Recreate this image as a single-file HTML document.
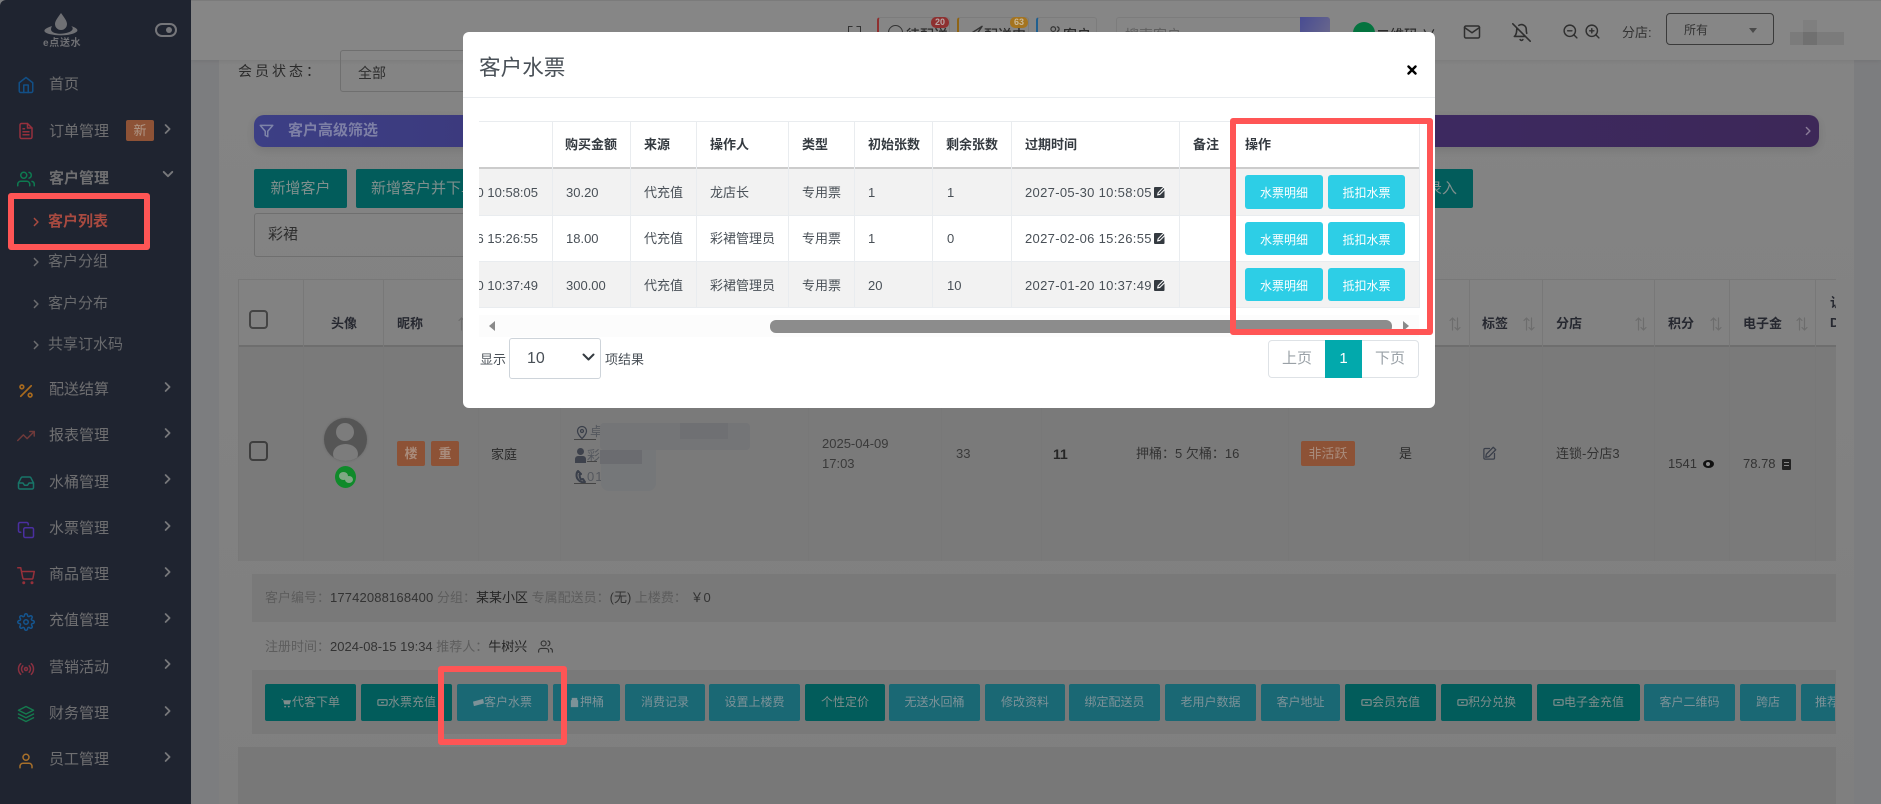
<!DOCTYPE html>
<html lang="zh-CN"><head><meta charset="utf-8"><title>客户水票</title>
<style>
html,body{margin:0;padding:0;width:1881px;height:804px;overflow:hidden;background:#7c7d7f;font-family:"Liberation Sans","Noto Sans CJK SC",sans-serif;font-size:13px}
.a{position:absolute}
.t{position:absolute;white-space:nowrap;line-height:20px;height:20px;margin-top:1px}
svg{position:absolute;fill:none;stroke-linecap:round;stroke-linejoin:round}
.side{left:0;top:0;width:191px;height:804px;background:#1f2430;border-top-left-radius:6px}
.m{font-size:15px;color:#6f6f71;left:49px}
.s{font-size:15px;color:#696a6d;left:48px}
.ic{width:18px;height:18px;left:17px;stroke-width:2}
.ch{width:8px;height:12px;left:164px;stroke:#77787b;stroke-width:2.200;margin-top:1px}
.sc{width:7px;height:10px;left:33px;stroke:#6b6c6f;stroke-width:2.200;margin-top:1px}
.b{position:absolute;top:684px;height:37px;line-height:37px;text-align:center;font-size:12px;border-radius:2px;white-space:nowrap;overflow:hidden}
.d{background:#025c5b;color:#7f8d8c}
.l{background:#1a6874;color:#7d9298}
.bi{position:static;display:inline-block;vertical-align:-2px;width:11px;height:11px}
.v{position:absolute;width:1px;background:#787878}
.hd{font-weight:bold;color:#262830;font-size:13px}
.mh{font-weight:bold;color:#343a40;font-size:13px}
.mc{color:#495057;font-size:13px}
.dt{letter-spacing:.32px}
.mv{position:absolute;width:1px;background:#e9ecef;top:121px;height:187px}
.mb{position:absolute;width:78px;height:34px;line-height:36px;background:#2dcee6;color:#fff;font-size:12px;text-align:center;border-radius:3px}
.rb{position:absolute;border:6px solid #ff5555;border-radius:3px;box-sizing:border-box}
.tp{font-size:14px;color:#2c2c2c;font-weight:500}
</style></head><body>
<svg width="0" height="0" style="position:absolute"><defs>
<symbol id="home" viewBox="0 0 24 24"><path d="M3 9l9-7 9 7v11a2 2 0 0 1-2 2H5a2 2 0 0 1-2-2z"/><path d="M9 22V12h6v10"/></symbol>
<symbol id="file" viewBox="0 0 24 24"><path d="M14 2H6a2 2 0 0 0-2 2v16a2 2 0 0 0 2 2h12a2 2 0 0 0 2-2V8z"/><path d="M14 2v6h6M16 13H8M16 17H8M10 9H8"/></symbol>
<symbol id="users" viewBox="0 0 24 24"><path d="M17 21v-2a4 4 0 0 0-4-4H5a4 4 0 0 0-4 4v2"/><circle cx="9" cy="7" r="4"/><path d="M23 21v-2a4 4 0 0 0-3-3.87M16 3.13a4 4 0 0 1 0 7.75"/></symbol>
<symbol id="pct" viewBox="0 0 24 24"><path d="M19 5L5 19"/><circle cx="6.5" cy="6.5" r="2.5"/><circle cx="17.5" cy="17.5" r="2.5"/></symbol>
<symbol id="trend" viewBox="0 0 24 24"><path d="M23 6l-9.5 9.5-5-5L1 18"/><path d="M17 6h6v6"/></symbol>
<symbol id="inbox" viewBox="0 0 24 24"><path d="M22 12h-6l-2 3h-4l-2-3H2"/><path d="M5.45 5.11L2 12v6a2 2 0 0 0 2 2h16a2 2 0 0 0 2-2v-6l-3.45-6.89A2 2 0 0 0 16.76 4H7.24a2 2 0 0 0-1.79 1.11z"/></symbol>
<symbol id="copy" viewBox="0 0 24 24"><rect x="9" y="9" width="13" height="13" rx="2"/><path d="M5 15H4a2 2 0 0 1-2-2V4a2 2 0 0 1 2-2h9a2 2 0 0 1 2 2v1"/></symbol>
<symbol id="cart" viewBox="0 0 24 24"><circle cx="9" cy="21" r="1"/><circle cx="20" cy="21" r="1"/><path d="M1 1h4l2.68 13.39a2 2 0 0 0 2 1.61h9.72a2 2 0 0 0 2-1.61L23 6H6"/></symbol>
<symbol id="gear" viewBox="0 0 24 24"><circle cx="12" cy="12" r="3"/><path d="M19.4 15a1.65 1.65 0 0 0 .33 1.82l.06.06a2 2 0 0 1 0 2.83 2 2 0 0 1-2.83 0l-.06-.06a1.65 1.65 0 0 0-1.82-.33 1.65 1.65 0 0 0-1 1.51V21a2 2 0 0 1-2 2 2 2 0 0 1-2-2v-.09A1.65 1.65 0 0 0 9 19.4a1.65 1.65 0 0 0-1.82.33l-.06.06a2 2 0 0 1-2.83 0 2 2 0 0 1 0-2.83l.06-.06a1.65 1.65 0 0 0 .33-1.82 1.65 1.65 0 0 0-1.51-1H3a2 2 0 0 1-2-2 2 2 0 0 1 2-2h.09A1.65 1.65 0 0 0 4.6 9a1.65 1.65 0 0 0-.33-1.82l-.06-.06a2 2 0 0 1 0-2.83 2 2 0 0 1 2.83 0l.06.06a1.65 1.65 0 0 0 1.82.33H9a1.65 1.65 0 0 0 1-1.51V3a2 2 0 0 1 2-2 2 2 0 0 1 2 2v.09a1.65 1.65 0 0 0 1 1.51 1.65 1.65 0 0 0 1.82-.33l.06-.06a2 2 0 0 1 2.83 0 2 2 0 0 1 0 2.83l-.06.06a1.65 1.65 0 0 0-.33 1.82V9a1.65 1.65 0 0 0 1.51 1H21a2 2 0 0 1 2 2 2 2 0 0 1-2 2h-.09a1.65 1.65 0 0 0-1.51 1z"/></symbol>
<symbol id="radio" viewBox="0 0 24 24"><circle cx="12" cy="12" r="2"/><path d="M16.24 7.76a6 6 0 0 1 0 8.49m-8.48-.01a6 6 0 0 1 0-8.49m11.31-2.82a10 10 0 0 1 0 14.14m-14.14 0a10 10 0 0 1 0-14.14"/></symbol>
<symbol id="layers" viewBox="0 0 24 24"><path d="M12 2L2 7l10 5 10-5z"/><path d="M2 17l10 5 10-5M2 12l10 5 10-5"/></symbol>
<symbol id="user" viewBox="0 0 24 24"><path d="M20 21v-2a4 4 0 0 0-4-4H8a4 4 0 0 0-4 4v2"/><circle cx="12" cy="7" r="4"/></symbol>
<symbol id="mail" viewBox="0 0 24 24"><path d="M4 4h16c1.100 0 2 .9 2 2v12c0 1.100-.9 2-2 2H4c-1.100 0-2-.9-2-2V6c0-1.100.9-2 2-2z"/><path d="M22 6l-10 7L2 6"/></symbol>
<symbol id="cr" viewBox="0 0 10 14"><path d="M2 2l5 5-5 5"/></symbol>
<symbol id="edit" viewBox="0 0 12 12"><rect x="0" y="1" width="10.500" height="11" rx="1" fill="#343a40"/><path d="M3 9.500l.7-3L9.500 .5 12 3 6 9z" fill="#fff"/><path d="M4.400 8.100l.4-1.400L9.500 2 10.500 3 5.800 7.700z" fill="#343a40"/></symbol>
<symbol id="sort" viewBox="0 0 12 14"><path d="M3.500 1v12M1 3.500L3.500 1 6 3.500M8.500 1v12M6 10.500L8.500 13l2.500-2.500"/></symbol>
<symbol id="tk" viewBox="0 0 12 12"><rect x="1" y="3" width="10" height="6" rx="1" stroke="currentColor" stroke-width="1.300"/><path d="M5 6h2" stroke="currentColor" stroke-width="1.300"/></symbol>
<symbol id="bc" viewBox="0 0 12 12"><path d="M0 2h2l1.500 6h6L11 3.500H2.500z" fill="currentColor"/><circle cx="4.500" cy="10.500" r="1" fill="currentColor"/><circle cx="8.500" cy="10.500" r="1" fill="currentColor"/></symbol>
</defs></svg>

<!-- main background -->
<div class="a" style="left:191px;top:0;width:1690px;height:804px;background:#7c7d7f"></div>
<div class="a" style="left:219px;top:60px;width:1635px;height:744px;background:linear-gradient(#848484,#7f7f7f)"></div>
<div class="a" style="left:191px;top:0;width:1690px;height:60px;background:#868686;box-shadow:0 1px 4px rgba(0,0,0,.08);border-top:1px solid #7b7b7b;box-sizing:border-box"></div>

<!-- topbar -->
<div class="a" style="left:848px;top:26px;width:13px;height:8px;border:1.500px solid #333;border-bottom:0;box-sizing:border-box;clip-path:polygon(0 0,35% 0,35% 40%,65% 40%,65% 0,100% 0,100% 100%,0 100%)"></div>
<div class="a" style="left:877px;top:17px;width:73px;height:20px;border:1px solid #7c7c7c;border-left:2px solid #8f2f2f;border-radius:3px;box-sizing:border-box"></div>
<div class="a" style="left:888px;top:25px;width:15px;height:15px;border:1.500px solid #333;border-radius:50%;box-sizing:border-box"></div>
<div class="t tp" style="left:906px;top:24px">待配送</div>
<div class="a" style="left:931px;top:17px;width:18px;height:11px;line-height:11px;border-radius:5px;background:#8e3030;color:#b7a6a6;font-size:9px;text-align:center;font-weight:bold">20</div>
<div class="a" style="left:957px;top:17px;width:72px;height:20px;border:1px solid #7c7c7c;border-left:2px solid #8f6414;border-radius:3px;box-sizing:border-box"></div>
<svg style="left:968px;top:25px;width:15px;height:12px;stroke:#333;stroke-width:1.500" viewBox="0 0 16 12"><path d="M1 10L15 1 9 10"/></svg>
<div class="t tp" style="left:984px;top:24px">配送中</div>
<div class="a" style="left:1010px;top:17px;width:18px;height:11px;line-height:11px;border-radius:5px;background:#a5741f;color:#c9b896;font-size:9px;text-align:center;font-weight:bold">63</div>
<div class="a" style="left:1036px;top:17px;width:61px;height:20px;border:1px solid #7c7c7c;border-left:2px solid #205f8f;border-radius:3px;box-sizing:border-box"></div>
<svg style="left:1048px;top:25px;width:14px;height:14px;stroke:#333;stroke-width:2"><use href="#users"/></svg>
<div class="t tp" style="left:1063px;top:24px">客户</div>
<div class="a" style="left:1116px;top:17px;width:214px;height:20px;border:1px solid #7c7c7c;border-radius:3px;box-sizing:border-box"></div>
<div class="t" style="left:1125px;top:24px;font-size:14px;color:#5f5f5f">搜索客户</div>
<div class="a" style="left:1300px;top:17px;width:30px;height:20px;background:linear-gradient(120deg,#484c92,#6a688c);border-radius:0 3px 3px 0"></div>
<div class="a" style="left:1353px;top:22px;width:22px;height:22px;border-radius:50%;background:#04733f"></div>
<div class="t tp" style="left:1376px;top:24px">二维码 ∨</div>
<svg style="left:1463px;top:23px;width:18px;height:18px;stroke:#2f2f2f;stroke-width:2"><use href="#mail"/></svg>
<svg style="left:1512px;top:23px;width:19px;height:19px;stroke:#2f2f2f;stroke-width:2" viewBox="0 0 24 24"><path d="M13.730 21a2 2 0 0 1-3.460 0M18.630 13A17.890 17.890 0 0 1 18 8M6.260 6.260A5.860 5.860 0 0 0 6 8c0 7-3 9-3 9h14M18 8a6 6 0 0 0-9.330-5M1 1l22 22"/></svg>
<svg style="left:1562px;top:23px;width:17px;height:17px;stroke:#2f2f2f;stroke-width:2" viewBox="0 0 24 24"><circle cx="11" cy="11" r="8"/><path d="M21 21l-4.350-4.350M8 11h6"/></svg>
<svg style="left:1584px;top:23px;width:17px;height:17px;stroke:#2f2f2f;stroke-width:2" viewBox="0 0 24 24"><circle cx="11" cy="11" r="8"/><path d="M21 21l-4.350-4.350M8 11h6M11 8v6"/></svg>
<div class="t" style="left:1622px;top:22px;font-size:13px;color:#333">分店:</div>
<div class="a" style="left:1666px;top:13px;width:108px;height:32px;border:1px solid #3a3a3a;border-radius:4px;box-sizing:border-box"></div>
<div class="t" style="left:1684px;top:19px;font-size:12px;color:#333">所有</div>
<div class="a" style="left:1749px;top:28px;width:0;height:0;border:4px solid transparent;border-top:5px solid #4a4a4a"></div>
<div class="a" style="left:1790px;top:32px;width:54px;height:13px;background:#7b7b7b"></div>
<div class="a" style="left:1803px;top:20px;width:14px;height:12px;background:#7f7f7f"></div>
<div class="a" style="left:1803px;top:32px;width:14px;height:13px;background:#707070"></div>

<!-- filter -->
<div class="t" style="left:238px;top:60px;font-size:14px;letter-spacing:3px;color:#2b2b2b">会员状态：</div>
<div class="a" style="left:340px;top:50px;width:300px;height:42px;border:1px solid #6f6f6f;border-radius:3px;box-sizing:border-box"></div>
<div class="t" style="left:358px;top:62px;font-size:14px;color:#2f2f2f">全部</div>
<div class="a" style="left:254px;top:115px;width:1565px;height:32px;border-radius:10px;background:linear-gradient(90deg,#3c3f85 0%,#3d2a66 60%,#3d2858 100%);box-shadow:0 3px 8px rgba(0,0,0,.1)"></div>
<svg style="left:259px;top:123px;width:15px;height:16px;stroke:#7e84a8;stroke-width:2.400" viewBox="0 0 24 24"><path d="M22 3H2l8 9.460V19l4 2v-8.540z"/></svg>
<div class="t" style="left:288px;top:120px;font-size:15px;font-weight:bold;color:#7e80a6">客户高级筛选</div>
<svg style="left:1805px;top:126px;width:7px;height:10px;stroke:#8a7c98;stroke-width:2"><use href="#cr"/></svg>
<div class="a" style="left:254px;top:169px;width:93px;height:39px;background:#025c5b;border-radius:2px;line-height:39px;text-align:center;color:#7f8f8d;font-size:15px">新增客户</div>
<div class="a" style="left:356px;top:169px;width:1117px;height:39px;background:#025c5b;border-radius:2px;line-height:39px;color:#7f8f8d;font-size:15px;padding-left:15px;box-sizing:border-box">新增客户并下单</div>
<div class="t" style="left:1427px;top:178px;font-size:15px;color:#7f8f8d">录入</div>
<div class="a" style="left:254px;top:213px;width:500px;height:44px;border:1px solid #6f6f6f;border-radius:3px;box-sizing:border-box"></div>
<div class="t" style="left:268px;top:224px;font-size:15px;color:#2f2f2f">彩裙</div>

<!-- table -->
<div class="a" style="left:238px;top:279px;width:1598px;height:1px;background:#787878"></div>
<div class="a" style="left:238px;top:347px;width:1598px;height:214px;background:#7a7a7a"></div>
<div class="a" style="left:238px;top:345px;width:1598px;height:2px;background:#6e6e6e"></div>
<div class="a" style="left:238px;top:747px;width:1598px;height:57px;background:#787878"></div>
<div class="v" style="left:238px;top:279px;height:282px"></div>
<div class="v" style="left:303px;top:279px;height:282px"></div>
<div class="v" style="left:383px;top:279px;height:282px"></div>
<div class="v" style="left:478px;top:279px;height:282px"></div>
<div class="v" style="left:560px;top:279px;height:282px"></div>
<div class="v" style="left:808px;top:279px;height:282px"></div>
<div class="v" style="left:941px;top:279px;height:282px"></div>
<div class="v" style="left:1041px;top:279px;height:282px"></div>
<div class="v" style="left:1288px;top:279px;height:282px"></div>
<div class="v" style="left:1469px;top:279px;height:282px"></div>
<div class="v" style="left:1542px;top:279px;height:282px"></div>
<div class="v" style="left:1654px;top:279px;height:282px"></div>
<div class="v" style="left:1729px;top:279px;height:282px"></div>
<div class="v" style="left:1815px;top:279px;height:282px"></div>
<div class="a" style="left:249px;top:310px;width:19px;height:19px;border:2px solid #444;border-radius:4px;box-sizing:border-box"></div>
<div class="t hd" style="left:331px;top:313px">头像</div>
<div class="t hd" style="left:397px;top:313px">昵称</div>
<svg style="left:458px;top:317px;width:12px;height:14px;stroke:#6d6d6d;stroke-width:1.200"><use href="#sort"/></svg>
<svg style="left:1449px;top:317px;width:12px;height:14px;stroke:#6d6d6d;stroke-width:1.200"><use href="#sort"/></svg>
<div class="t hd" style="left:1482px;top:313px">标签</div>
<svg style="left:1523px;top:317px;width:12px;height:14px;stroke:#6d6d6d;stroke-width:1.200"><use href="#sort"/></svg>
<div class="t hd" style="left:1556px;top:313px">分店</div>
<svg style="left:1635px;top:317px;width:12px;height:14px;stroke:#6d6d6d;stroke-width:1.200"><use href="#sort"/></svg>
<div class="t hd" style="left:1668px;top:313px">积分</div>
<svg style="left:1710px;top:317px;width:12px;height:14px;stroke:#6d6d6d;stroke-width:1.200"><use href="#sort"/></svg>
<div class="t hd" style="left:1743px;top:313px">电子金</div>
<svg style="left:1796px;top:317px;width:12px;height:14px;stroke:#6d6d6d;stroke-width:1.200"><use href="#sort"/></svg>
<div class="a" style="left:1830px;top:293px;width:6px;height:44px;overflow:hidden"><div class="hd" style="width:14px;line-height:20px">认 D</div></div>

<!-- row -->
<div class="a" style="left:249px;top:441px;width:19px;height:20px;border:2px solid #3e3e3e;border-radius:4px;box-sizing:border-box"></div>
<div class="a" style="left:324px;top:418px;width:43px;height:43px;border-radius:50%;background:#555;overflow:hidden;box-shadow:0 0 2px #666">
<div class="a" style="left:12px;top:5px;width:18px;height:18px;border-radius:50%;background:#7c7c7c"></div>
<div class="a" style="left:9px;top:26px;width:25px;height:20px;border-radius:50%;background:#7c7c7c"></div></div>
<div class="a" style="left:335px;top:466px;width:21px;height:22px;border-radius:50%;background:#0f8a2a"></div>
<div class="a" style="left:339px;top:472px;width:9px;height:8px;border-radius:50%;background:#7ea884"></div>
<div class="a" style="left:345px;top:476px;width:8px;height:7px;border-radius:50%;background:#7ea884"></div>
<div class="a" style="left:397px;top:441px;width:28px;height:25px;line-height:25px;text-align:center;background:#8d5236;border-radius:2px;color:#a98c7c;font-size:13px;font-weight:bold">楼</div>
<div class="a" style="left:431px;top:441px;width:28px;height:25px;line-height:25px;text-align:center;background:#8d5236;border-radius:2px;color:#a98c7c;font-size:13px;font-weight:bold">重</div>
<div class="t" style="left:491px;top:444px;color:#2b2b2b">家庭</div>
<svg style="left:576px;top:425px;width:12px;height:15px;stroke:#3a3f4a;stroke-width:2.500" viewBox="0 0 24 28"><path d="M21 11c0 7-9 15-9 15s-9-8-9-15a9 9 0 0 1 18 0z"/><circle cx="12" cy="11" r="3"/></svg>
<div class="t" style="left:590px;top:421px;color:#55585e">卓</div>
<div class="a" style="left:574px;top:439px;width:22px;height:1px;background:#444"></div>
<div class="a" style="left:577px;top:448px;width:7px;height:7px;border-radius:50%;background:#3e424c"></div>
<div class="a" style="left:575px;top:456px;width:11px;height:7px;border-radius:3px 3px 0 0;background:#3e424c"></div>
<div class="t" style="left:587px;top:445px;color:#55585e">彩</div>
<div class="a" style="left:587px;top:461px;width:10px;height:1px;background:#444"></div>
<div class="t" style="left:587px;top:466px;color:#55585e;letter-spacing:1px">01</div>
<div class="a" style="left:574px;top:483px;width:22px;height:1px;background:#444"></div>
<svg style="left:575px;top:470px;width:11px;height:13px;stroke:#3a3f4a;stroke-width:2" viewBox="0 0 11 13"><path d="M3 1C1 3 1 7 3 9.500 5 12 8 12.500 10 12L8 9 6 9.500C5 8 4.500 6 4.500 4.500L6 4z"/></svg>
<div class="a" style="left:600px;top:423px;width:150px;height:27px;background:#747577;border-radius:4px"></div>
<div class="a" style="left:601px;top:450px;width:55px;height:41px;background:#757779;border-radius:0 0 8px 8px"></div>
<div class="a" style="left:600px;top:450px;width:42px;height:14px;background:#6b6c70"></div>
<div class="a" style="left:680px;top:423px;width:48px;height:16px;background:#6f7073"></div>
<div class="t" style="left:822px;top:433px;color:#3a3a3a">2025-04-09</div>
<div class="t" style="left:822px;top:453px;color:#3a3a3a">17:03</div>
<div class="t" style="left:956px;top:443px;color:#3a3a3a">33</div>
<div class="t" style="left:1053px;top:443px;color:#262626;font-weight:bold;font-size:14px">11</div>
<div class="t" style="left:1136px;top:443px;color:#333">押桶：5 欠桶：16</div>
<div class="a" style="left:1301px;top:441px;width:54px;height:25px;line-height:25px;text-align:center;background:#8d5236;border-radius:2px;color:#a98c7c;font-size:13px">非活跃</div>
<div class="t" style="left:1399px;top:443px;color:#2b2b2b">是</div>
<svg style="left:1482px;top:446px;width:15px;height:15px;stroke:#3a3f4a;stroke-width:2" viewBox="0 0 24 24"><path d="M12 4H5a2 2 0 0 0-2 2v13a2 2 0 0 0 2 2h13a2 2 0 0 0 2-2v-7"/><path d="M18 2l4 4-11 11-5 1 1-5z"/></svg>
<div class="t" style="left:1556px;top:443px;color:#333">连锁-分店3</div>
<div class="t" style="left:1668px;top:453px;color:#333">1541</div>
<div class="a" style="left:1703px;top:460px;width:11px;height:8px;border-radius:50%;background:#111"></div>
<div class="a" style="left:1706px;top:462px;width:4px;height:4px;border-radius:50%;background:#888"></div>
<div class="t" style="left:1743px;top:453px;color:#333">78.78</div>
<div class="a" style="left:1782px;top:459px;width:9px;height:11px;background:#222;border-radius:1px"></div>
<div class="a" style="left:1784px;top:462px;width:5px;height:1px;background:#888"></div>
<div class="a" style="left:1784px;top:465px;width:5px;height:1px;background:#888"></div>

<!-- detail -->
<div class="a" style="left:252px;top:574px;width:1584px;height:48px;background:#797979"></div>
<div class="t" style="left:265px;top:587px;color:#5d5d5d">客户编号：<span style="color:#333;letter-spacing:.15px">17742088168400</span> 分组：<span style="color:#262626">某某小区</span> 专属配送员：<span style="color:#333">(无)</span> 上楼费： <span style="color:#333">￥0</span></div>
<div class="t" style="left:265px;top:636px;color:#5d5d5d">注册时间：<span style="color:#333">2024-08-15 19:34</span> 推荐人：<span style="color:#262626">牛树兴</span></div>
<svg style="left:538px;top:639px;width:15px;height:15px;stroke:#333;stroke-width:1.800"><use href="#users"/></svg>
<div class="a" style="left:252px;top:670px;width:1584px;height:64px;background:#797979"></div>
<div class="b d" style="left:265px;width:91px"><svg class="bi"><use href="#bc"/></svg>代客下单</div>
<div class="b d" style="left:361px;width:91px"><svg class="bi"><use href="#tk"/></svg>水票充值</div>
<div class="b l" style="left:457px;width:91px"><svg class="bi" viewBox="0 0 12 12"><path d="M0 5l11-3 1 5L1 10z" fill="currentColor"/></svg>客户水票</div>
<div class="b l" style="left:553px;width:67px"><svg class="bi" viewBox="0 0 12 12"><path d="M3 1h6v2l1 1v7H2V4l1-1z" fill="currentColor"/></svg>押桶</div>
<div class="b l" style="left:625px;width:80px">消费记录</div>
<div class="b l" style="left:709px;width:91px">设置上楼费</div>
<div class="b d" style="left:805px;width:80px">个性定价</div>
<div class="b l" style="left:889px;width:91px">无送水回桶</div>
<div class="b l" style="left:985px;width:80px">修改资料</div>
<div class="b l" style="left:1069px;width:91px">绑定配送员</div>
<div class="b l" style="left:1165px;width:91px">老用户数据</div>
<div class="b l" style="left:1261px;width:79px">客户地址</div>
<div class="b d" style="left:1345px;width:91px"><svg class="bi"><use href="#tk"/></svg>会员充值</div>
<div class="b d" style="left:1441px;width:91px"><svg class="bi"><use href="#tk"/></svg>积分兑换</div>
<div class="b d" style="left:1537px;width:103px"><svg class="bi"><use href="#tk"/></svg>电子金充值</div>
<div class="b l" style="left:1644px;width:91px">客户二维码</div>
<div class="b l" style="left:1740px;width:56px">跨店</div>
<div class="b l" style="left:1801px;width:34px;border-radius:2px 0 0 2px;text-align:left;padding-left:14px;box-sizing:border-box">推荐</div>

<!-- sidebar -->
<div class="a side"></div>
<svg style="left:43px;top:12px;width:36px;height:26px" viewBox="0 0 36 26"><path d="M18 1c-3.500 5-6 8-6 11a6 6 0 0 0 12 0c0-3-2.500-6-6-11z" fill="#6f7074"/><path d="M9 14C3 16 0 18 2 20c4 4 26 5 32-.5 1.500-2-1-4-6-5.500 3 2 2 5-3 6.500-6 2-13 1.500-16-1-1.500-1.500-1-3.500 0-5.500z" fill="#6f7074"/></svg>
<div class="t" style="left:43px;top:33px;font-size:10px;color:#6f7074;font-weight:bold;letter-spacing:.7px">e点送水</div>
<div class="a" style="left:155px;top:23px;width:22px;height:14px;border:2px solid #75767a;border-radius:8px;box-sizing:border-box"></div>
<div class="a" style="left:166px;top:27px;width:6px;height:6px;border-radius:50%;background:#75767a"></div>

<svg class="ic" style="top:76px;stroke:#124f86"><use href="#home"/></svg><div class="t m" style="top:74px">首页</div>
<svg class="ic" style="top:122px;stroke:#96303d"><use href="#file"/></svg><div class="t m" style="top:121px">订单管理</div>
<div class="a" style="left:126px;top:120px;width:28px;height:21px;line-height:21px;text-align:center;background:#8d5236;border-radius:2px;color:#b09888;font-size:13px">新</div>
<svg class="ch" style="top:122px"><use href="#cr"/></svg>
<svg class="ic" style="top:170px;stroke:#0e7a50"><use href="#users"/></svg><div class="t m" style="top:168px;font-weight:bold">客户管理</div>
<svg style="left:162px;top:170px;width:12px;height:9px;stroke:#77787b;stroke-width:2.200" viewBox="0 0 14 10"><path d="M2 2l5 5 5-5"/></svg>
<svg class="sc" style="top:216px;stroke:#a84a40"><use href="#cr"/></svg><div class="t s" style="top:211px;color:#a84a40;font-weight:bold">客户列表</div>
<svg class="sc" style="top:256px"><use href="#cr"/></svg><div class="t s" style="top:251px">客户分组</div>
<svg class="sc" style="top:298px"><use href="#cr"/></svg><div class="t s" style="top:293px">客户分布</div>
<svg class="sc" style="top:339px"><use href="#cr"/></svg><div class="t s" style="top:334px">共享订水码</div>
<svg class="ic" style="top:382px;stroke:#a86a1e;stroke-width:2.200"><use href="#pct"/></svg><div class="t m" style="top:379px">配送结算</div>
<svg class="ch" style="top:380px"><use href="#cr"/></svg>
<svg class="ic" style="top:427px;stroke:#6f3a3a"><use href="#trend"/></svg><div class="t m" style="top:425px">报表管理</div>
<svg class="ch" style="top:426px"><use href="#cr"/></svg>
<svg class="ic" style="top:474px;stroke:#187568"><use href="#inbox"/></svg><div class="t m" style="top:472px">水桶管理</div>
<svg class="ch" style="top:472px"><use href="#cr"/></svg>
<svg class="ic" style="top:521px;stroke:#4a2fa0"><use href="#copy"/></svg><div class="t m" style="top:518px">水票管理</div>
<svg class="ch" style="top:519px"><use href="#cr"/></svg>
<svg class="ic" style="top:567px;stroke:#96303a"><use href="#cart"/></svg><div class="t m" style="top:564px">商品管理</div>
<svg class="ch" style="top:565px"><use href="#cr"/></svg>
<svg class="ic" style="top:613px;stroke:#14558f"><use href="#gear"/></svg><div class="t m" style="top:610px">充值管理</div>
<svg class="ch" style="top:611px"><use href="#cr"/></svg>
<svg class="ic" style="top:660px;stroke:#8a3040"><use href="#radio"/></svg><div class="t m" style="top:657px">营销活动</div>
<svg class="ch" style="top:657px"><use href="#cr"/></svg>
<svg class="ic" style="top:705px;stroke:#157a4e"><use href="#layers"/></svg><div class="t m" style="top:703px">财务管理</div>
<svg class="ch" style="top:704px"><use href="#cr"/></svg>
<svg class="ic" style="top:752px;stroke:#a8702a"><use href="#user"/></svg><div class="t m" style="top:749px">员工管理</div>
<svg class="ch" style="top:750px"><use href="#cr"/></svg>

<!-- modal -->
<div class="a" style="left:463px;top:32px;width:972px;height:376px;background:#fff;border-radius:6px"></div>
<div class="a" style="left:463px;top:97px;width:972px;height:1px;background:#e9ecef"></div>
<div class="t" style="left:479px;top:55px;height:24px;line-height:24px;font-size:21.600px;color:#495057">客户水票</div>
<svg style="left:1407px;top:65px;width:10px;height:10px;stroke:#000;stroke-width:2.400" viewBox="0 0 10 10"><path d="M1.500 1.500l7 7M8.500 1.500l-7 7"/></svg>
<div class="a" style="left:479px;top:121px;width:940px;height:1px;background:#e9ecef"></div>
<div class="a" style="left:479px;top:167px;width:940px;height:2px;background:#ccc"></div>
<div class="a" style="left:479px;top:169px;width:940px;height:46px;background:#f2f2f2"></div>
<div class="a" style="left:479px;top:215px;width:940px;height:1px;background:#e9ecef"></div>
<div class="a" style="left:479px;top:261px;width:940px;height:47px;background:#f2f2f2;border-top:1px solid #e9ecef;border-bottom:1px solid #e9ecef;box-sizing:border-box"></div>
<div class="mv" style="left:552px"></div><div class="mv" style="left:630px"></div><div class="mv" style="left:696px"></div><div class="mv" style="left:788px"></div><div class="mv" style="left:854px"></div><div class="mv" style="left:932px"></div><div class="mv" style="left:1011px"></div><div class="mv" style="left:1179px"></div><div class="mv" style="left:1419px"></div>
<div class="t mh" style="left:565px;top:134px">购买金额</div><div class="t mh" style="left:644px;top:134px">来源</div><div class="t mh" style="left:710px;top:134px">操作人</div><div class="t mh" style="left:802px;top:134px">类型</div><div class="t mh" style="left:868px;top:134px">初始张数</div><div class="t mh" style="left:946px;top:134px">剩余张数</div><div class="t mh" style="left:1025px;top:134px">过期时间</div><div class="t mh" style="left:1193px;top:134px">备注</div><div class="t mh" style="left:1245px;top:134px">操作</div>

<div class="a" style="left:479px;top:162px;width:59px;height:150px;overflow:hidden">
<div class="t mc" style="right:0;top:20px">0 10:58:05</div><div class="t mc" style="right:0;top:66px">6 15:26:55</div><div class="t mc" style="right:0;top:113px">0 10:37:49</div></div>

<div class="t mc" style="left:566px;top:182px">30.20</div><div class="t mc" style="left:644px;top:182px">代充值</div><div class="t mc" style="left:710px;top:182px">龙店长</div><div class="t mc" style="left:802px;top:182px">专用票</div><div class="t mc" style="left:868px;top:182px">1</div><div class="t mc" style="left:947px;top:182px">1</div><div class="t mc dt" style="left:1025px;top:182px">2027-05-30 10:58:05</div>
<svg style="left:1154px;top:186px;width:12px;height:12px"><use href="#edit"/></svg>
<div class="t mc" style="left:566px;top:228px">18.00</div><div class="t mc" style="left:644px;top:228px">代充值</div><div class="t mc" style="left:710px;top:228px">彩裙管理员</div><div class="t mc" style="left:802px;top:228px">专用票</div><div class="t mc" style="left:868px;top:228px">1</div><div class="t mc" style="left:947px;top:228px">0</div><div class="t mc dt" style="left:1025px;top:228px">2027-02-06 15:26:55</div>
<svg style="left:1154px;top:232px;width:12px;height:12px"><use href="#edit"/></svg>
<div class="t mc" style="left:566px;top:275px">300.00</div><div class="t mc" style="left:644px;top:275px">代充值</div><div class="t mc" style="left:710px;top:275px">彩裙管理员</div><div class="t mc" style="left:802px;top:275px">专用票</div><div class="t mc" style="left:868px;top:275px">20</div><div class="t mc" style="left:947px;top:275px">10</div><div class="t mc dt" style="left:1025px;top:275px">2027-01-20 10:37:49</div>
<svg style="left:1154px;top:279px;width:12px;height:12px"><use href="#edit"/></svg>

<div class="mb" style="left:1245px;top:175px">水票明细</div><div class="mb" style="left:1328px;top:175px;width:77px">抵扣水票</div>
<div class="mb" style="left:1245px;top:222px;height:33px">水票明细</div><div class="mb" style="left:1328px;top:222px;width:77px;height:33px">抵扣水票</div>
<div class="mb" style="left:1245px;top:268px;height:33px">水票明细</div><div class="mb" style="left:1328px;top:268px;width:77px;height:33px">抵扣水票</div>

<div class="a" style="left:479px;top:315px;width:940px;height:22px;background:#fcfcfc"></div>
<div class="a" style="left:770px;top:320px;width:622px;height:13px;background:#8c8c8c;border-radius:6px"></div>
<div class="a" style="left:489px;top:321px;width:0;height:0;border:5.500px solid transparent;border-right:6px solid #8a8a8a;border-left:0"></div>
<div class="a" style="left:1403px;top:321px;width:0;height:0;border:5.500px solid transparent;border-left:6px solid #8a8a8a;border-right:0"></div>

<div class="t" style="left:480px;top:349px;color:#495057;font-size:13px">显示</div>
<div class="a" style="left:509px;top:338px;width:92px;height:41px;border:1px solid #ced4da;border-radius:3px;box-sizing:border-box;line-height:39px;padding-left:17px;font-size:16px;color:#495057">10</div>
<svg style="left:582px;top:353px;width:13px;height:9px;stroke:#343a40;stroke-width:2" viewBox="0 0 13 9"><path d="M1.500 1.500l5 5 5-5"/></svg>
<div class="t" style="left:605px;top:349px;color:#495057;font-size:13px">项结果</div>

<div class="a" style="left:1268px;top:340px;width:151px;height:38px;border:1px solid #dee2e6;border-radius:4px;box-sizing:border-box"></div>
<div class="t" style="left:1282px;top:348px;font-size:15px;color:#9aa1a7">上页</div>
<div class="a" style="left:1325px;top:340px;width:37px;height:38px;line-height:38px;text-align:center;background:#02a9ac;color:#fff;font-size:15px">1</div>
<div class="t" style="left:1375px;top:348px;font-size:15px;color:#9aa1a7">下页</div>

<!-- annotation boxes -->
<div class="rb" style="left:8px;top:193px;width:142px;height:57px"></div>
<div class="rb" style="left:1230px;top:118px;width:203px;height:217px"></div>
<div class="rb" style="left:438px;top:666px;width:129px;height:79px"></div>
</body></html>
